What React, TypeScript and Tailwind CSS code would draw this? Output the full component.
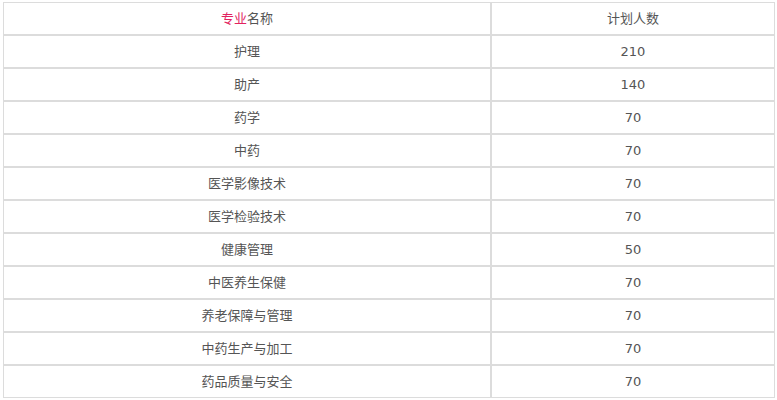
const rows: [string, string][] = [
  ['护理', '210'],
  ['助产', '140'],
  ['药学', '70'],
  ['中药', '70'],
  ['医学影像技术', '70'],
  ['医学检验技术', '70'],
  ['健康管理', '50'],
  ['中医养生保健', '70'],
  ['养老保障与管理', '70'],
  ['中药生产与加工', '70'],
  ['药品质量与安全', '70'],
];

export default function App() {
  return (
    <div className="min-h-[400px] w-[777px] bg-white pl-[3px] pt-[2px] font-['DejaVu_Sans','Noto_Sans_CJK_SC',sans-serif] text-[13px] text-[#555]">
      <table className="w-[772px] border-separate border-spacing-0">
        <thead>
          <tr>
            <th className="h-[33px] w-[488px] border border-[#dcdcdc] p-0 text-center font-normal">
              <span className="text-[#e2235f]">专业</span>名称
            </th>
            <th className="h-[33px] border border-[#dcdcdc] p-0 text-center font-normal">计划人数</th>
          </tr>
        </thead>
        <tbody>
          {rows.map(([name, num]) => (
            <tr key={name}>
              <td className="h-[33px] border border-[#dcdcdc] p-0 text-center">{name}</td>
              <td className="h-[33px] border border-[#dcdcdc] p-0 text-center">{num}</td>
            </tr>
          ))}
        </tbody>
      </table>
    </div>
  );
}
